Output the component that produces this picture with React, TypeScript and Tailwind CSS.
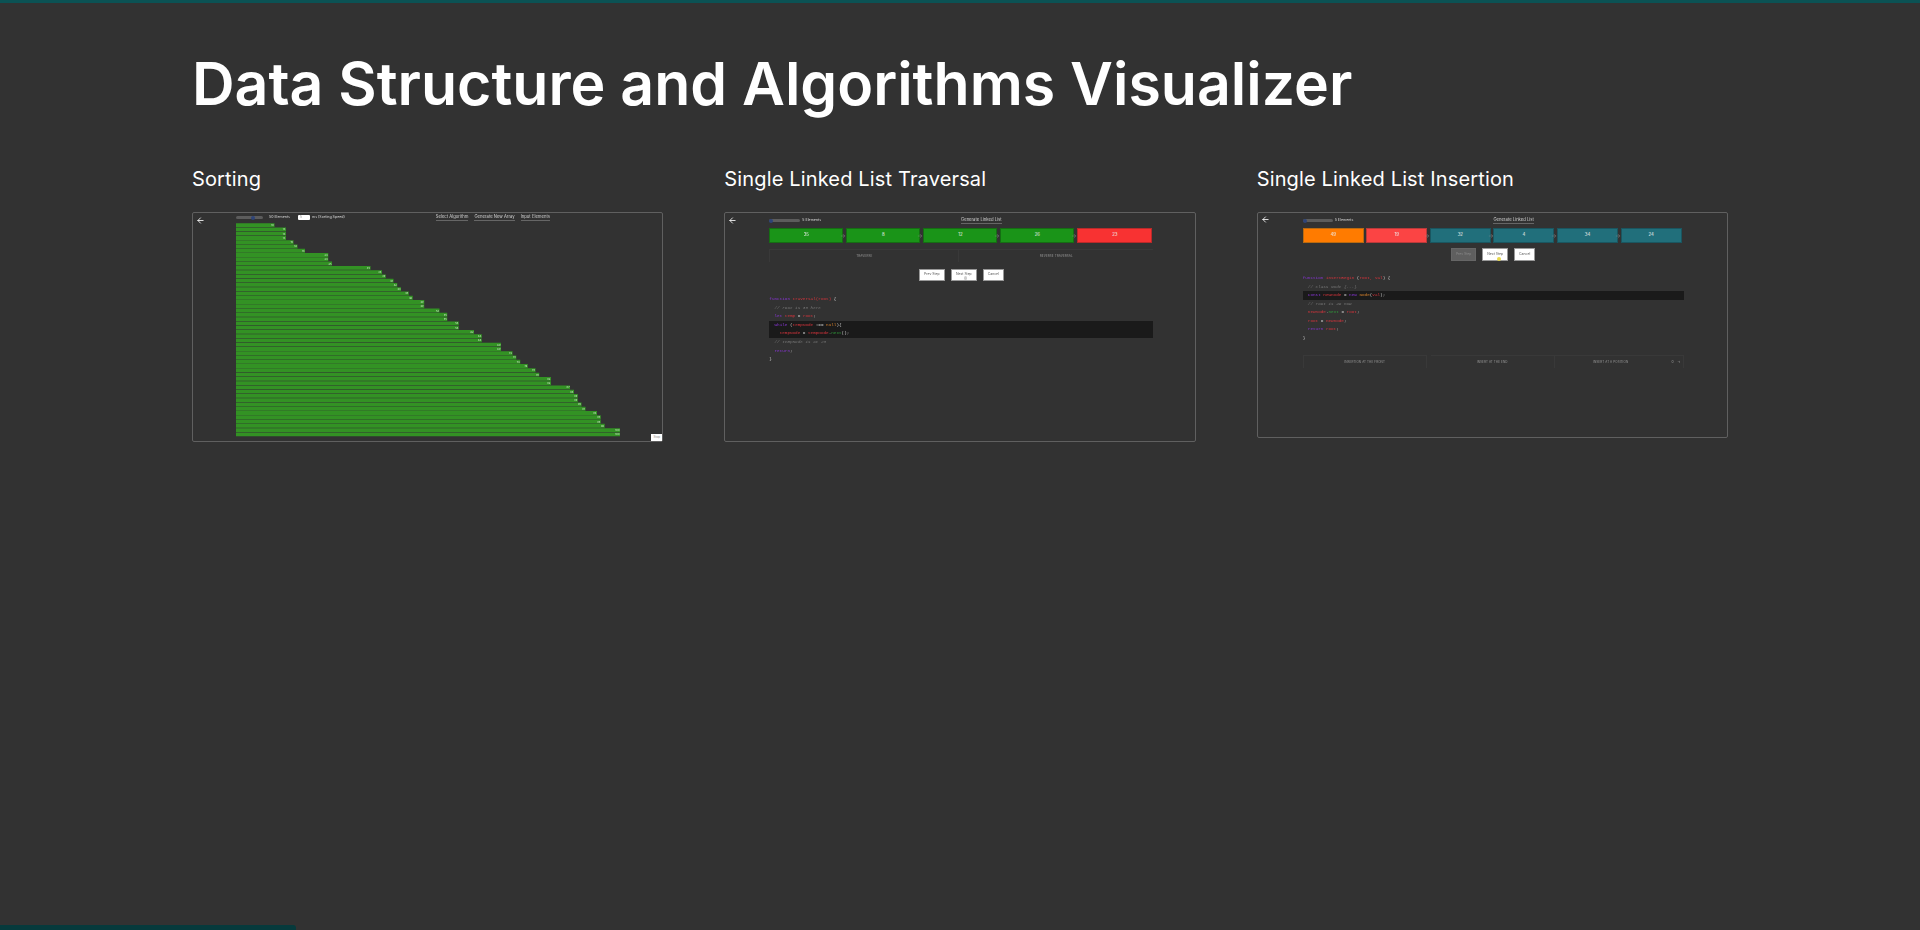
import { ArrowLeft, ArrowRight } from "lucide-react";

const sortValues = [
  10, 13, 13, 13, 15, 16, 18, 24, 24, 25, 35, 38, 39, 41, 42, 43, 45, 46, 49, 49, 53, 55, 55, 58, 58,
  62, 64, 64, 69, 69, 72, 73, 74, 76, 78, 79, 82, 82, 87, 88, 89, 89, 90, 91, 94, 95, 95, 96, 100, 100,
];

const P = "text-[#8a35d8]";
const R = "text-[#d8343c]";
const O = "text-[#d9822b]";
const G = "text-[#2f9a3a]";
const C = "text-[#777777] italic";
const W = "text-[#cccccc]";

type Token = [string, string];

const traversalCode: Token[][] = [
  [["function ", P], ["traversal(root)", R], [" {", W]],
  [["  // root is 35 here", C]],
  [["  let ", P], ["temp", R], [" = ", W], ["root", R], [";", W]],
  [["  while ", P], ["(", W], ["tempNode", R], [" !== ", W], ["null", O], ["){", W]],
  [["    tempNode", R], [" = ", W], ["tempNode", R], [".", W], ["next", G], ["();", W]],
  [["  // tempNode is at 23", C]],
  [["  return", P], [";", W]],
  [["}", W]],
];

const insertCode: Token[][] = [
  [["function ", P], ["insertBegin ", R], ["(", W], ["root, val", R], [") {", W]],
  [["  // class Node {...}", C]],
  [["  const ", P], ["newnode", R], [" = ", W], ["new ", P], ["Node", O], ["(", W], ["val", R], [");", W]],
  [["  // root is 49 now", C]],
  [["  newnode", R], [".", W], ["next", G], [" = ", W], ["root", R], [";", W]],
  [["  root", R], [" = ", W], ["newnode", R], [";", W]],
  [["  return ", P], ["root", R], [";", W]],
  [["}", W]],
];

function Slider({ width, knob }: { width: string; knob: string }) {
  return (
    <div className={`relative h-[3px] rounded-full bg-[#5c5c5c] ${width}`}>
      <div className={`absolute top-[-0.5px] h-[4px] w-[4px] rounded-full bg-[#2f4478] ${knob}`} />
    </div>
  );
}

function TopLink({ children }: { children: string }) {
  return <span className="border-b border-[#666666] pb-[1px] text-[4.2px] leading-[4px] text-[#cfcfcf]">{children}</span>;
}

function BackColumn({ className }: { className: string }) {
  return (
    <div className={`shrink-0 ${className}`}>
      <ArrowLeft size={9} color="#ffffff" strokeWidth={2.2} />
    </div>
  );
}

function CodeBlock({ lines, highlight, height }: { lines: Token[][]; highlight: number[]; height: string }) {
  return (
    <div className="flex flex-col font-['Liberation_Mono',monospace] text-[4.3px] whitespace-pre">
      {lines.map((line, i) => (
        <div key={i} className={`${height} flex items-center ${highlight.includes(i) ? "bg-[#1a1a1a]" : ""}`}>
          {line.map(([text, color], j) => (
            <span key={j} className={color}>
              {text}
            </span>
          ))}
        </div>
      ))}
    </div>
  );
}

function MiniButton({ children, disabled, width }: { children: string; disabled?: boolean; width: string }) {
  return (
    <div
      className={`flex items-center justify-center border-[0.5px] text-[3.4px] ${width} ${
        disabled ? "border-[#666666] bg-[#5f5f5f] text-[#8a8a8a]" : "border-[#999999] bg-white text-[#555555]"
      }`}
    >
      {children}
    </div>
  );
}

function Node({ value, color, arrow, width }: { value: number; color: string; arrow?: boolean; width: string }) {
  return (
    <div className={`relative flex items-center justify-center border-[0.5px] text-[4.3px] text-[#eeeeee] ${color} ${width}`}>
      {value}
      {arrow && (
        <ArrowRight size={6} color="#9a9a9a" strokeWidth={1.5} className="absolute right-[-4px] top-1/2 -translate-y-1/2" />
      )}
    </div>
  );
}

function SortingPreview() {
  return (
    <div className="relative flex h-[230px] rounded-[2px] border border-[#606060]">
      <BackColumn className="w-[43px] pl-[3px] pt-[3px]" />
      <div className="w-[384px] blur-[0.25px]">
        <div className="flex h-[10px] items-center justify-between pr-[70px]">
          <div className="flex items-center text-[3.6px] text-[#dddddd]">
            <Slider width="w-[27px]" knob="left-[15px]" />
            <span className="ml-[6px]">50 Elements</span>
            <div className="ml-[8px] h-[5px] w-[12px] rounded-[1px] bg-white pl-[2px] text-[3px] leading-[5px] text-[#777777]">5</div>
            <span className="ml-[2px]">ms (Sorting Speed)</span>
          </div>
          <div className="flex items-center gap-[6px]">
            <TopLink>Select Algorithm</TopLink>
            <TopLink>Generate New Array</TopLink>
            <TopLink>Input Elements</TopLink>
          </div>
        </div>
        {/* drawn at 4x and scaled down so the rows keep their fractional pitch */}
        <div className="h-[213.5px]">
          <div className="flex w-[1536px] origin-top-left scale-[0.25] flex-col">
            {sortValues.map((value, i) => (
              <div key={i} className="flex h-[17.08px] items-center">
                <div
                  className="flex h-[15.5px] items-center justify-end bg-[#339224] pr-[2px] text-[10px] text-[#d5ecd0]"
                  style={{ width: `${value}%` }}
                >
                  {value}
                </div>
              </div>
            ))}
          </div>
        </div>
      </div>
      <div className="absolute bottom-0 right-0 flex h-[7px] w-[11px] items-center justify-center bg-white text-[3px] text-[#888888]">
        Stop
      </div>
    </div>
  );
}

function TraversalPreview() {
  return (
    <div className="relative flex h-[230px] rounded-[2px] border border-[#606060]">
      <BackColumn className="w-[44px] pl-[3px] pt-[3px]" />
      <div className="w-[384px] blur-[0.25px]">
        <div className="flex h-[15px] items-center text-[3.6px] text-[#dddddd]">
          <Slider width="w-[31px]" knob="left-0" />
          <span className="ml-[2px]">5 Elements</span>
          <div className="ml-[140px]">
            <TopLink>Generate Linked List</TopLink>
          </div>
        </div>
        <div className="flex h-[15px] gap-[3px]">
          <Node value={35} color="bg-[#1a9418] border-[#156e13]" arrow width="w-[74px]" />
          <Node value={8} color="bg-[#1a9418] border-[#156e13]" arrow width="w-[74px]" />
          <Node value={12} color="bg-[#1a9418] border-[#156e13]" arrow width="w-[74px]" />
          <Node value={26} color="bg-[#1a9418] border-[#156e13]" arrow width="w-[74px]" />
          <Node value={23} color="bg-[#f83232] border-[#b92a2a]" width="w-[75px]" />
        </div>
        <div className="mt-[6px] flex h-[13px] border-l border-t border-[#393939] text-[3px] tracking-[0.1px] text-[#999999]">
          <div className="flex w-[189px] items-center justify-center border-r border-[#393939]">TRAVERSE</div>
          <div className="flex flex-1 items-center justify-center">REVERSE TRAVERSAL</div>
        </div>
        <div className="mt-[7px] flex h-[12px] justify-center gap-[6px]">
          <MiniButton width="w-[26px]">Prev Step</MiniButton>
          <MiniButton width="w-[26px]">Next Step</MiniButton>
          <MiniButton width="w-[21px]">Cancel</MiniButton>
        </div>
        <div className="mt-[14px]">
          <CodeBlock lines={traversalCode} highlight={[3, 4]} height="h-[8.6px]" />
        </div>
      </div>
    </div>
  );
}

function InsertionPreview() {
  return (
    <div className="relative flex h-[226px] rounded-[2px] border border-[#606060]">
      <BackColumn className="w-[45px] pl-[3px] pt-[2px]" />
      <div className="w-[381px] blur-[0.25px]">
        <div className="flex h-[15px] items-center text-[3.6px] text-[#dddddd]">
          <Slider width="w-[30px]" knob="left-0" />
          <span className="ml-[2px]">5 Elements</span>
          <div className="ml-[140px]">
            <TopLink>Generate Linked List</TopLink>
          </div>
        </div>
        <div className="flex h-[15px] gap-[2.6px]">
          <Node value={49} color="bg-[#ff7b00] border-[#b96a10]" width="w-[61px]" />
          <Node value={19} color="bg-[#fb4444] border-[#b93a3a]" arrow width="w-[61px]" />
          <Node value={32} color="bg-[#216f7b] border-[#1a5660]" arrow width="w-[61px]" />
          <Node value={4} color="bg-[#216f7b] border-[#1a5660]" arrow width="w-[61px]" />
          <Node value={34} color="bg-[#216f7b] border-[#1a5660]" arrow width="w-[61px]" />
          <Node value={24} color="bg-[#216f7b] border-[#1a5660]" width="w-[61px]" />
        </div>
        <div className="mt-[5px] flex h-[13px] justify-center gap-[6px]">
          <MiniButton disabled width="w-[25px]">
            Prev Step
          </MiniButton>
          <MiniButton width="w-[26px]">Next Step</MiniButton>
          <MiniButton width="w-[21px]">Cancel</MiniButton>
        </div>
        <div className="mt-[13px]">
          <CodeBlock lines={insertCode} highlight={[2]} height="h-[8.55px]" />
        </div>
        <div className="mt-[13px] flex h-[13px] text-[3px] tracking-[0.1px] text-[#999999]">
          <div className="flex w-[124px] items-center justify-center border-x border-t border-[#393939]">INSERTION AT THE FRONT</div>
          <div className="ml-[4px] flex w-[124px] items-center justify-center border-r border-t border-[#393939]">INSERT AT THE END</div>
          <div className="relative flex flex-1 items-center justify-center border-t border-r border-[#393939] pr-[16px]">
            INSERT AT A POSITION
            <span className="absolute right-[9px] text-[3.4px]">0</span>
            <span className="absolute right-[2px] text-[3.4px]">→</span>
          </div>
        </div>
      </div>
    </div>
  );
}

export default function App() {
  return (
    <div className="relative h-[930px] overflow-hidden bg-[#323232] font-['Inter',sans-serif] text-white">
      <div className="h-[3px] bg-[#0b5254]" />
      <div className="mx-[192px]">
        <h1 className="mt-[46px] text-[59px] leading-[70px] font-semibold">
          Data Structure and Algorithms Visualizer
        </h1>
        <div className="mt-[46px] grid grid-cols-3 items-start gap-x-[61px]">
          <div>
            <h2 className="mb-[19px] text-[20px] leading-[28px] tracking-[0.15px]">Sorting</h2>
            <SortingPreview />
          </div>
          <div>
            <h2 className="mb-[19px] text-[20px] leading-[28px] tracking-[0.15px]">Single Linked List Traversal</h2>
            <TraversalPreview />
          </div>
          <div>
            <h2 className="mb-[19px] text-[20px] leading-[28px] tracking-[0.15px]">Single Linked List Insertion</h2>
            <InsertionPreview />
          </div>
        </div>
      </div>
      {/* cursor markers caught in the previews */}
      <div className="absolute left-[964px] top-[276px] h-[4px] w-[3px] rounded-full bg-[#cfcfcf]" />
      <div className="absolute left-[1497px] top-[257px] h-[4px] w-[4px] rounded-full bg-[#e8d84a]" />
      <div className="absolute bottom-0 left-0 h-[5px] w-[296px] rounded-tr-[3px] bg-[#063a3c]" />
    </div>
  );
}
